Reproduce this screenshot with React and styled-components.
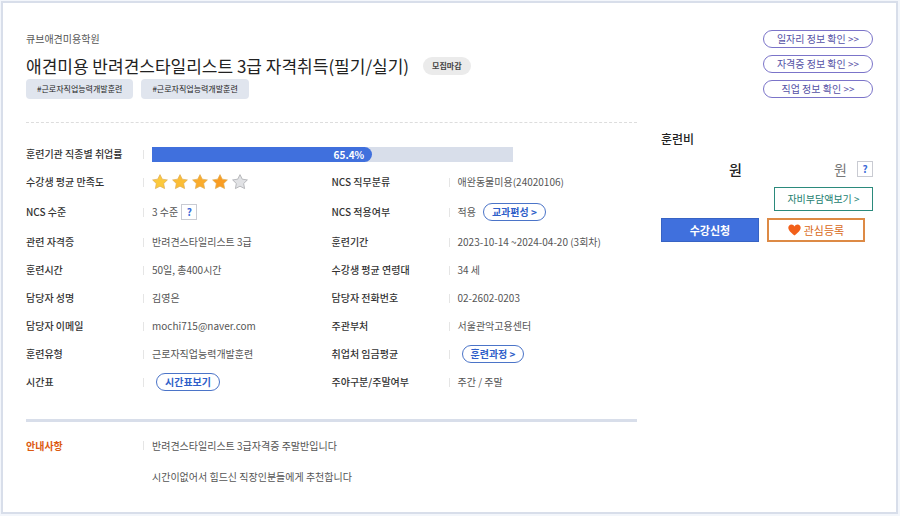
import React from "react";
import styled, { createGlobalStyle } from "styled-components";

const tags = ["#근로자직업능력개발훈련", "#근로자직업능력개발훈련"];

const infoLinks = ["일자리 정보 확인 >>", "자격증 정보 확인 >>", "직업 정보 확인 >>"];

const starColors = ["#fcc93c", "#fbbd35", "#faac2c", "#f99d22"];

const employment = { label: "65.4%", fill: 61 };

const App = () => {
  return (
    <>
      <GlobalStyle />
      <Frame>
        <Main>
          <Academy>큐브애견미용학원</Academy>
          <TitleRow>
            <h1>애견미용 반려견스타일리스트 3급 자격취득(필기/실기)</h1>
            <Status>모집마감</Status>
          </TitleRow>
          <TagList>
            {tags.map((tag, i) => (
              <li key={i}>{tag}</li>
            ))}
          </TagList>

          <InfoList>
            <Item label="훈련기관 직종별 취업률" wide>
              <Track>
                <Fill style={{ width: `${employment.fill}%` }}>
                  {employment.label}
                </Fill>
              </Track>
            </Item>
            <Item label="수강생 평균 만족도">
              <Rating score={4} />
            </Item>
            <Item label="NCS 직무분류">애완동물미용(24020106)</Item>
            <Item label="NCS 수준" tall>
              3 수준
              <Help type="button" $spaced>
                ?
              </Help>
            </Item>
            <Item label="NCS 적용여부" tall>
              적용
              <Pill type="button">교과편성 &gt;</Pill>
            </Item>
            <Item label="관련 자격증">반려견스타일리스트 3급</Item>
            <Item label="훈련기간">2023-10-14 ~2024-04-20 (3회차)</Item>
            <Item label="훈련시간">50일, 총400시간</Item>
            <Item label="수강생 평균 연령대">34 세</Item>
            <Item label="담당자 성명">김영은</Item>
            <Item label="담당자 전화번호">02-2602-0203</Item>
            <Item label="담당자 이메일">mochi715@naver.com</Item>
            <Item label="주관부처">서울관악고용센터</Item>
            <Item label="훈련유형">근로자직업능력개발훈련</Item>
            <Item label="취업처 임금평균">
              <Pill type="button" $first>
                훈련과정 &gt;
              </Pill>
            </Item>
            <Item label="시간표">
              <Pill type="button" $first>
                시간표보기
              </Pill>
            </Item>
            <Item label="주야구분/주말여부">주간 / 주말</Item>
          </InfoList>

          <Notice>
            <Term $accent>안내사항</Term>
            <NoticeText>
              <p>반려견스타일리스트 3급자격증 주말반입니다</p>
              <p>시간이없어서 힘드신 직장인분들에게 추천합니다</p>
            </NoticeText>
          </Notice>
        </Main>

        <Side>
          <LinkList>
            {infoLinks.map((text) => (
              <a href="#info" key={text}>
                {text}
              </a>
            ))}
          </LinkList>
          <CostTitle>훈련비</CostTitle>
          <CostRow>
            <Price>원</Price>
            <Price $muted>원</Price>
            <Help type="button">?</Help>
          </CostRow>
          <BurdenButton type="button">자비부담액보기 &gt;</BurdenButton>
          <Actions>
            <ApplyButton type="button">수강신청</ApplyButton>
            <WishButton type="button">
              <Heart />
              관심등록
            </WishButton>
          </Actions>
        </Side>
      </Frame>
    </>
  );
};

//Info item

const Item = ({ label, wide, tall, children }) => {
  return (
    <Pair $wide={wide} $tall={tall}>
      <Term>{label}</Term>
      <Value>{children}</Value>
    </Pair>
  );
};

//Star rating

const Rating = ({ score }) => {
  return (
    <Stars role="img" aria-label={`${score} / 5`}>
      {[0, 1, 2, 3, 4].map((i) => (
        <svg key={i} width="16" height="16" viewBox="0 0 16 16">
          <path
            d="M8 0.6 L10.3 5.2 L15.4 5.9 L11.7 9.5 L12.6 14.6 L8 12.2 L3.4 14.6 L4.3 9.5 L0.6 5.9 L5.7 5.2 Z"
            fill={i < score ? starColors[i] : "#e1e2e5"}
            stroke={i < score ? "#dfae55" : "#a2a3a8"}
            strokeWidth="0.7"
            strokeLinejoin="round"
          />
        </svg>
      ))}
    </Stars>
  );
};

const Heart = () => (
  <svg width="13" height="12" viewBox="0 0 13 12" aria-hidden="true">
    <path
      d="M6.5 11.6 C5.6 10.4 0.3 7.3 0.3 3.7 C0.3 1.8 1.7 0.5 3.4 0.5 C4.8 0.5 6 1.3 6.5 2.4 C7 1.3 8.2 0.5 9.6 0.5 C11.3 0.5 12.7 1.8 12.7 3.7 C12.7 7.3 7.4 10.4 6.5 11.6 Z"
      fill="#f2601a"
    />
  </svg>
);

//Styling

const GlobalStyle = createGlobalStyle`
  * {
    box-sizing: border-box;
    margin: 0;
    padding: 0;
  }
  body {
    padding: 1px 2px 2px 1px;
    background: #f3f6fb;
    color: #555;
    font-family: "Noto Sans CJK KR", "Noto Sans", sans-serif;
    font-size: 10px;
    line-height: 16px;
  }
  button {
    font: inherit;
    cursor: pointer;
  }
  a {
    text-decoration: none;
  }
  ul {
    list-style: none;
  }
`;

const Frame = styled.div`
  display: flex;
  gap: 24px;
  padding: 27px 23px 20px;
  border: 2px solid #d8deea;
  background: white;
`;

const Main = styled.main`
  flex: 1;
  min-width: 0;
`;

const Academy = styled.p`
  line-height: 18px;
`;

const TitleRow = styled.div`
  display: flex;
  align-items: center;
  gap: 14px;
  margin-top: 5px;
  h1 {
    color: #222;
    font-size: 17px;
    font-weight: 400;
    line-height: 26px;
  }
`;

const Status = styled.span`
  padding: 0 9px;
  border-radius: 9px;
  background: #ebebeb;
  color: #444;
  font-size: 8px;
  font-weight: 700;
  line-height: 18px;
`;

const TagList = styled.ul`
  display: flex;
  gap: 8px;
  padding-bottom: 23px;
  border-bottom: 1px dashed #ddd;
  li {
    padding: 0 11px;
    border-radius: 4px;
    background: #e0e5ee;
    color: #222;
    font-size: 8px;
    line-height: 20px;
  }
`;

const InfoList = styled.dl`
  display: grid;
  grid-template-columns: 1fr 1fr;
  padding: 17px 0 23px;
  border-bottom: 3px solid #d8deea;
`;

const Pair = styled.div`
  display: flex;
  align-items: center;
  min-height: ${({ $tall }) => ($tall ? "32px" : "28px")};
  grid-column: ${({ $wide }) => ($wide ? "1 / -1" : "auto")};
`;

const Term = styled.dt`
  display: flex;
  flex: 0 0 118px;
  align-items: center;
  justify-content: space-between;
  color: ${({ $accent }) => ($accent ? "#dc5a10" : "#333")};
  font-weight: ${({ $accent }) => ($accent ? 700 : 500)};
  &::after {
    content: "";
    width: 1px;
    height: 9px;
    background: #e5e5e5;
  }
`;

const Value = styled.dd`
  display: flex;
  flex: 1;
  align-items: center;
  padding-left: 8px;
`;

const Track = styled.div`
  flex: 0 1 361px;
  background: #d8deea;
`;

const Fill = styled.div`
  padding-right: 8px;
  border-radius: 0 8px 8px 0;
  background: #4070dd;
  color: white;
  font-weight: 700;
  line-height: 15px;
  text-align: right;
`;

const Stars = styled.div`
  display: flex;
  gap: 4px;
`;

const Help = styled.button`
  width: 16px;
  height: 16px;
  margin-left: ${({ $spaced }) => ($spaced ? "3px" : "0")};
  border: 1px solid #c9cbd2;
  background: white;
  color: #3b6bd8;
  font-weight: 700;
  line-height: 14px;
`;

const Pill = styled.button`
  margin-left: ${({ $first }) => ($first ? "4px" : "7px")};
  padding: 0 8px;
  border: 1px solid #4b74c8;
  border-radius: 9px;
  background: white;
  color: #2f5fc9;
  font-weight: 700;
`;

const Notice = styled.dl`
  display: flex;
  align-items: flex-start;
  padding-top: 8px;
  dt {
    line-height: 31px;
  }
`;

const NoticeText = styled.dd`
  padding-left: 8px;
  line-height: 31px;
`;

const Side = styled.aside`
  flex: 0 0 212px;
`;

const LinkList = styled.nav`
  display: flex;
  flex-direction: column;
  align-items: flex-end;
  gap: 7px;
  a {
    width: 110px;
    border: 1px solid #7b74c9;
    border-radius: 9px;
    color: #5551a6;
    text-align: center;
  }
`;

const CostTitle = styled.h2`
  margin-top: 32px;
  color: #222;
  font-size: 12px;
  font-weight: 500;
  line-height: 18px;
`;

const CostRow = styled.div`
  display: grid;
  grid-template-columns: 81px 1fr 16px;
  align-items: center;
  column-gap: 10px;
  margin-top: 9px;
`;

const Price = styled.span`
  color: ${({ $muted }) => ($muted ? "#777" : "#222")};
  font-size: 14px;
  font-weight: ${({ $muted }) => ($muted ? 400 : 500)};
  line-height: 24px;
  text-align: right;
`;

const BurdenButton = styled.button`
  display: block;
  width: 99px;
  height: 24px;
  margin: 6px 0 0 auto;
  border: 1px solid #2b8a7c;
  background: white;
  color: #25806f;
`;

const Actions = styled.div`
  display: flex;
  gap: 8px;
  margin-top: 7px;
  button {
    width: 98px;
    height: 24px;
    font-size: 11px;
  }
`;

const ApplyButton = styled.button`
  border: 1px solid #3763c4;
  background: #4070dd;
  color: white;
  font-weight: 700;
`;

const WishButton = styled.button`
  display: flex;
  align-items: center;
  justify-content: center;
  gap: 3px;
  border: 2px solid #dd8a45;
  background: white;
  color: #d96a20;
`;

export default App;
